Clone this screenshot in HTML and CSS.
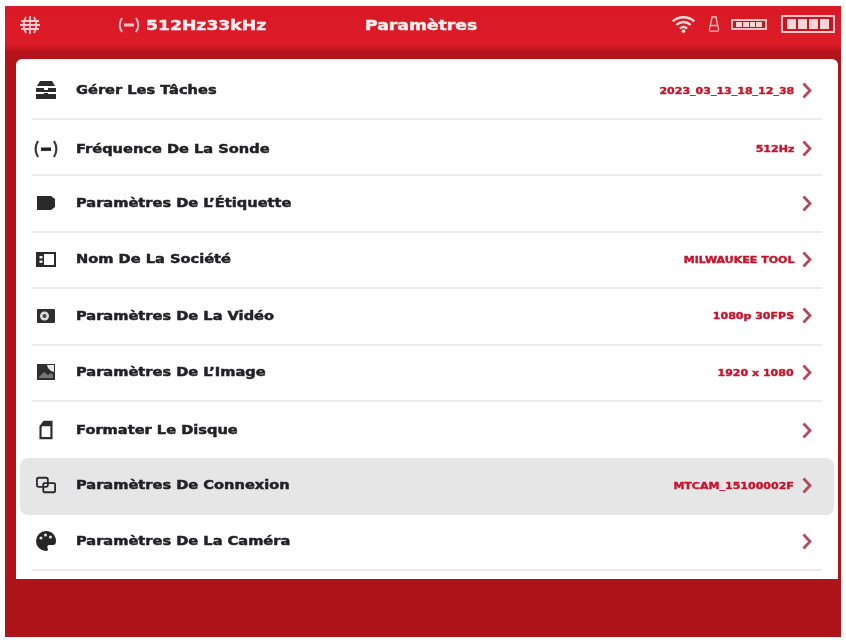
FILE: index.html
```html
<!DOCTYPE html>
<html lang="fr">
<head>
<meta charset="utf-8">
<title>Paramètres</title>
<link rel="stylesheet" href="styles.css">
</head>
<body>
<div class="screen">
  <header class="topbar">
    <svg class="ic-grid" viewBox="0 0 20 18"><g fill="none" stroke="#f6c9cc" stroke-width="1.8"><path d="M1 5h18M0 9h20M1 13h18"/><path d="M6 1C3 6 3 12 6 17M10 0v18M14 1c3 5 3 11 0 16"/></g></svg>
    <span class="probe">
      <svg class="ic-probe" viewBox="0 0 22 16"><g fill="none" stroke="#f6c0c4" stroke-width="2"><path d="M4 1C1 5 1 11 4 15M18 1c3 4 3 10 0 14"/></g><rect x="6" y="6.500" width="10" height="3" fill="#f6c0c4"/></svg>
      <span class="wide-l">512Hz33kHz</span>
    </span>
    <span class="page-title wide-l">Paramètres</span>
    <span class="status">
      <svg class="ic-wifi" viewBox="0 0 26 20"><g fill="none" stroke="#f8d5d7" stroke-width="2.600"><path d="M1 7c7-6 17-6 24 0M5 11c5-4 11-4 16 0M9 15c2.500-2 5.500-2 8 0"/></g><circle cx="13" cy="18" r="2" fill="#f8d5d7"/></svg>
      <svg class="ic-lamp" viewBox="0 0 12 18"><path d="M3 1h6M4 1 1 15M8 1l3 14M1 16h10M2.500 10h7" fill="none" stroke="#f4b8bc" stroke-width="1.500"/></svg>
      <span class="batt small"><i></i><i></i><i></i><i></i></span>
      <span class="batt large"><i></i><i></i><i></i><i></i></span>
    </span>
  </header>

  <main class="panel">
    <ul class="list">
      <li class="row lift">
        <svg class="icon" viewBox="0 0 20 20"><path d="M4 1h12l3 5H1zM0 8h8v2h4V8h8v4H0zM0 14h8v-1h4v1h8v5H0z" fill="#2c2c2e"/></svg>
        <span class="label">Gérer Les Tâches</span>
        <span class="value">2023_03_13_18_12_38</span>
        <svg class="chev" viewBox="0 0 10 16"><path d="M1.500 1 8 8l-6.500 7"/></svg>
      </li>
      <li class="row drop">
        <svg class="icon probe-ic" viewBox="0 0 24 20"><g fill="none" stroke="#3a3a3c" stroke-width="2.200"><path d="M4 2C1 7 1 13 4 18M20 2c3 5 3 11 0 16"/></g><rect x="7" y="8.500" width="10" height="3.400" fill="#222"/></svg>
        <span class="label">Fréquence De La Sonde</span>
        <span class="value">512Hz</span>
        <svg class="chev" viewBox="0 0 10 16"><path d="M1.500 1 8 8l-6.500 7"/></svg>
      </li>
      <li class="row lift">
        <svg class="icon" viewBox="0 0 20 20"><path d="M1 3h14l4 3v8l-4 3H1z" fill="#2a2a2c"/></svg>
        <span class="label">Paramètres De L’Étiquette</span>
        <span class="value"></span>
        <svg class="chev" viewBox="0 0 10 16"><path d="M1.500 1 8 8l-6.500 7"/></svg>
      </li>
      <li class="row lift">
        <svg class="icon" viewBox="0 0 20 20"><path d="M1 4h18v13H1z" fill="none" stroke="#2a2a2c" stroke-width="2"/><path d="M2 5h6v11H2z" fill="#2a2a2c"/><path d="M3.500 7h3v2.500h-3zM3.500 11.500h3V14h-3z" fill="#eee"/></svg>
        <span class="label">Nom De La Société</span>
        <span class="value">MILWAUKEE TOOL</span>
        <svg class="chev" viewBox="0 0 10 16"><path d="M1.500 1 8 8l-6.500 7"/></svg>
      </li>
      <li class="row lift">
        <svg class="icon" viewBox="0 0 20 20"><path d="M2 3h16a1 1 0 0 1 1 1v12a1 1 0 0 1-1 1H2a1 1 0 0 1-1-1V4a1 1 0 0 1 1-1z" fill="#2f2f31"/><circle cx="8.500" cy="10" r="4.500" fill="#ddd"/><circle cx="8.500" cy="10" r="2" fill="#444"/></svg>
        <span class="label">Paramètres De La Vidéo</span>
        <span class="value">1080p 30FPS</span>
        <svg class="chev" viewBox="0 0 10 16"><path d="M1.500 1 8 8l-6.500 7"/></svg>
      </li>
      <li class="row lift">
        <svg class="icon" viewBox="0 0 20 20"><path d="M1 2h18v16H1z" fill="#2f2f31"/><path d="M3 15l5-5 4 3 3-2 2 2v3H3z" fill="#777"/><path d="M11 3h7v7l-3-1-3-3z" fill="#e8e8e8"/></svg>
        <span class="label">Paramètres De L’Image</span>
        <span class="value">1920 x 1080</span>
        <svg class="chev" viewBox="0 0 10 16"><path d="M1.500 1 8 8l-6.500 7"/></svg>
      </li>
      <li class="row no-line">
        <svg class="icon" viewBox="0 0 20 22"><path d="M8 2h8v18H4V7z" fill="none" stroke="#2f2f31" stroke-width="2.400"/><path d="M9 1h7v6H4z" fill="#2f2f31"/></svg>
        <span class="label">Formater Le Disque</span>
        <span class="value"></span>
        <svg class="chev" viewBox="0 0 10 16"><path d="M1.500 1 8 8l-6.500 7"/></svg>
      </li>
      <li class="row lift active">
        <svg class="icon" viewBox="0 0 22 20"><g fill="none" stroke="#2a2a2c" stroke-width="2"><rect x="1" y="2" width="12" height="10" rx="2"/><rect x="8" y="8" width="13" height="10" rx="1"/></g></svg>
        <span class="label">Paramètres De Connexion</span>
        <span class="value">MTCAM_15100002F</span>
        <svg class="chev" viewBox="0 0 10 16"><path d="M1.500 1 8 8l-6.500 7"/></svg>
      </li>
      <li class="row lift last">
        <svg class="icon" viewBox="0 0 20 20"><path d="M10 0a10 10 0 0 0 0 20c2 0 2.500-1.500 1.500-3-.8-1.500.2-3 2-3H17c2 0 3-1.500 3-4C20 4 15.500 0 10 0z" fill="#262628"/><circle cx="5" cy="7" r="1.600" fill="#ddd"/><circle cx="9.500" cy="4" r="1.600" fill="#ddd"/><circle cx="14.500" cy="6" r="1.600" fill="#ddd"/></svg>
        <span class="label">Paramètres De La Caméra</span>
        <span class="value"></span>
        <svg class="chev" viewBox="0 0 10 16"><path d="M1.500 1 8 8l-6.500 7"/></svg>
      </li>
    </ul>
  </main>
  <footer class="bottombar"></footer>
</div>
</body>
</html>
```

FILE: styles.css
```css
* { box-sizing: border-box; }
html, body { margin: 0; height: 100%; background: #fdfdfd; }
body { padding: 6px 5px 3px; font-family: "DejaVu Sans", sans-serif; font-weight: 700; }

.screen {
  width: 836px;
  height: 631px;
  display: flex;
  flex-direction: column;
  background: #b0141b;
}

.topbar {
  flex: 0 0 53px;
  display: flex;
  align-items: flex-start;
  padding: 9px 6px 0 15px;
  color: #fbeeee;
  background: linear-gradient(#d81a26 0, #dc1b27 38px, #b5131c 46px, #b5141c 53px);
}
.topbar > * { filter: blur(0.4px); }
.wide-l { transform: scaleX(1.23); transform-origin: left center; -webkit-text-stroke: 0.45px #fbeeee; }
.ic-grid { width: 20px; height: 18px; margin-top: 1px; }
.probe { display: flex; align-items: center; gap: 6px; margin-top: 1px; margin-left: 78px; font-size: 14px; line-height: 18px; }
.ic-probe { width: 22px; height: 16px; }
.page-title { margin-top: 1px; margin-left: 121px; font-size: 14px; line-height: 18px; }
.status { margin-left: auto; display: flex; align-items: center; height: 18px; }
.ic-wifi { width: 25px; height: 18px; }
.ic-lamp { width: 12px; height: 17px; margin-left: 12px; }
.batt { display: flex; border: 2px solid #f4c3c6; background: #c7141f; }
.batt i { display: block; flex: 1; background: #f6d5d7; }
.batt.small { margin-left: 11px; width: 36px; height: 11px; gap: 1px; padding: 1px 3px; }
.batt.large { margin-left: 14px; width: 54px; height: 18px; gap: 2px; padding: 2px 4px; }

.panel {
  flex: 0 0 520px;
  margin: 0 3px 0 11px;
  background: #fff;
  border-radius: 6px 6px 0 0;
  padding: 4.6px 4px 0;
}
.list { list-style: none; margin: 0; padding: 0; }

.row {
  position: relative;
  height: 56.4px;
  display: flex;
  align-items: center;
  padding: 0 22px 0 16px;
}
.row::after {
  content: "";
  position: absolute;
  left: 12px;
  right: 12px;
  bottom: 0;
  height: 2px;
  background: #ececec;
}
.row.lift { padding-bottom: 3px; }
.row.drop { padding-top: 1px; }
.row.active { background: #e6e6e6; border-radius: 8px; }
.row.active::after, .row.no-line::after { display: none; }
.row.last::after { background: #f7e6e8; }

.icon { flex: none; width: 20px; height: 20px; filter: blur(0.5px); }
.icon.probe-ic { width: 24px; margin: 0 -2px; }
.label {
  margin-left: 20px;
  font-size: 11.500px;
  color: #222226;
  white-space: nowrap;
  transform: scaleX(1.27);
  transform-origin: left center;
  -webkit-text-stroke: 0.45px #222226;
  filter: blur(0.35px);
}
.value {
  margin-left: auto;
  font-size: 9.500px;
  color: #c5142c;
  white-space: nowrap;
  transform: scaleX(1.16);
  transform-origin: right center;
  -webkit-text-stroke: 0.4px #c5142c;
  filter: blur(0.35px);
}
.chev { flex: none; width: 10px; height: 17px; margin-left: 8px; filter: blur(0.35px); }
.chev path { fill: none; stroke: #b44a5e; stroke-width: 2.800; }

.bottombar { flex: 1; background: #b0141b; }
```
